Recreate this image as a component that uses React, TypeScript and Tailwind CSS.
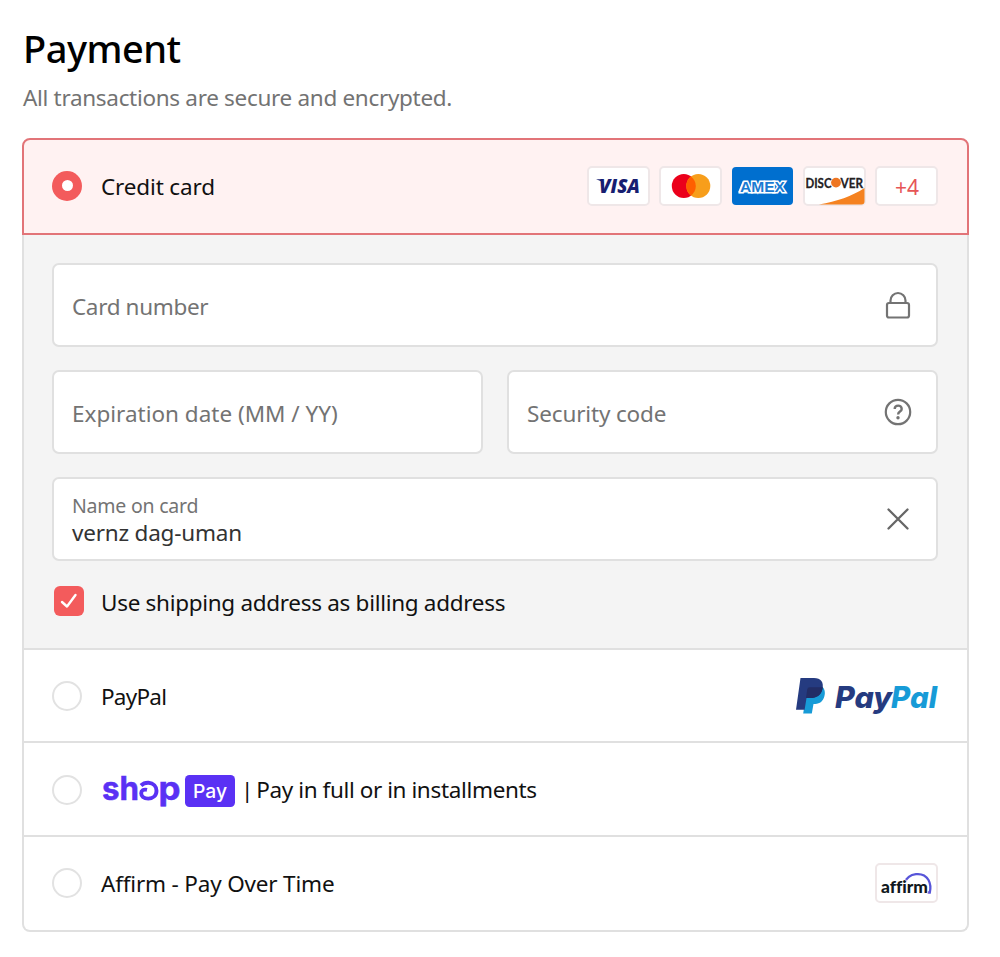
import type { ReactNode } from "react";

function Radio({ checked = false }: { checked?: boolean }) {
  return checked ? (
    <span className="mb-px flex size-[30px] shrink-0 items-center justify-center rounded-full bg-[#f35b5c]">
      <span className="size-[11px] rounded-full bg-white" />
    </span>
  ) : (
    <span className="size-[30px] shrink-0 rounded-full border-2 border-[#e2e2e2] bg-white" />
  );
}

function Badge({ children }: { children: ReactNode }) {
  return (
    <span className="flex h-10 w-[63px] shrink-0 items-center justify-center rounded-[5px] border-2 border-[#efe7e8] bg-white">
      {children}
    </span>
  );
}

function Field({ label, icon }: { label: ReactNode; icon?: ReactNode }) {
  return (
    <div className="flex h-[84px] flex-1 items-center justify-between rounded-[7px] border-2 border-[#e0e0e0] bg-white pr-6 pl-[18px]">
      <span className="pt-[4px] text-[#737373]">{label}</span>
      {icon}
    </div>
  );
}

function Visa() {
  return (
    <svg width="59" height="36" viewBox="0 0 59 36" className="shrink-0 overflow-visible">
      <text x="10" y="24.500" fontFamily="Open Sans, sans-serif" fontSize="18.500" fontWeight="800" fontStyle="italic" fill="#171e71" textLength="41" lengthAdjust="spacingAndGlyphs">VISA</text>
      <path d="M7 11.300h6l2 4.500c-1.500-1.900-4.200-3.300-8-4.500z" fill="#171e71" />
    </svg>
  );
}

function Mastercard() {
  return (
    <svg width="59" height="36" viewBox="0 0 59 36" className="shrink-0">
      <circle cx="22.800" cy="18" r="12" fill="#eb001b" />
      <circle cx="37.300" cy="18" r="12" fill="#f79e1b" />
      <path d="M30 8.400a12 12 0 0 1 0 19.200 12 12 0 0 1 0-19.200z" fill="#ff5f00" />
    </svg>
  );
}

function Amex() {
  return (
    <span className="flex h-10 w-[63px] items-center justify-center">
      <svg width="61" height="38" viewBox="0 0 61 38">
        <rect width="61" height="38" rx="4" fill="#006fcf" />
        <path d="M6 25.500 11 13.500 16 20 15 25.500z" fill="#fff" />
        <text x="8" y="24.500" fontFamily="Liberation Sans, sans-serif" fontSize="15" fontWeight="700" fill="#1a7bd3" stroke="#fff" strokeWidth="2.800" paintOrder="stroke" textLength="45" lengthAdjust="spacingAndGlyphs">AMEX</text>
      </svg>
    </span>
  );
}

function Discover() {
  return (
    <svg width="59" height="36" viewBox="0 0 59 36" className="shrink-0 overflow-visible">
      <path d="M59.500 20V33.500Q59.500 36.500 56.500 36.500H14C32 33.500 47 28 59.500 20z" fill="#f58220" />
      <text x="0.500" y="19.500" fontFamily="Lato, sans-serif" fontSize="14" fontWeight="700" fill="#24211f" stroke="#24211f" strokeWidth="0.300" textLength="26" lengthAdjust="spacingAndGlyphs">DISC</text>
      <circle cx="31" cy="14.600" r="4.900" fill="#ee7623" />
      <text x="35.500" y="19.500" fontFamily="Lato, sans-serif" fontSize="14" fontWeight="700" fill="#24211f" stroke="#24211f" strokeWidth="0.300" textLength="22.500" lengthAdjust="spacingAndGlyphs">VER</text>
    </svg>
  );
}

function PayPal() {
  return (
    <svg width="144" height="38" viewBox="0 0 144 38" className="overflow-visible">
      <path d="M13.500 9H27.500C31.500 12 31.500 17 29.800 21 28 25.500 24.500 27 19.500 27L17.800 36.500H9.200z" fill="#179bd7" />
      <path d="M6.500 1H20C27 1 30 5.500 28.500 11.800 27 18.500 22.500 21 16.500 21H12.500L10.600 32.700H2z" fill="#253b80" />
      <path d="M13.200 12.500Q13.500 10.200 15.800 10.200H28.700L28.500 12C27 18.500 22.500 21 16.500 21H12z" fill="#222d65" />
      <g fontFamily="Inter, sans-serif" fontSize="29.500" fontWeight="800" fontStyle="italic">
        <text x="41" y="31" fill="#253b80" textLength="57" lengthAdjust="spacingAndGlyphs">Pay</text>
        <text x="97" y="31" fill="#179bd7" textLength="46" lengthAdjust="spacingAndGlyphs">Pal</text>
      </g>
    </svg>
  );
}

function ShopPay() {
  return (
    <svg width="134" height="36" viewBox="0 0 134 36" className="overflow-visible">
      <g fontFamily="Inter, sans-serif" fontSize="32" fontWeight="700" fill="#5a31f4" stroke="#5a31f4" strokeWidth="0.500">
        <text x="1" y="28" textLength="37" lengthAdjust="spacingAndGlyphs">sh</text>
        <text x="57.500" y="28" textLength="22" lengthAdjust="spacingAndGlyphs">p</text>
      </g>
      <path d="M40 13.500C42.500 11 45 10.600 47.500 10.700 52.500 11 55.500 14.500 55.500 18.700 55.500 23.500 52 26.600 47.300 26.600 42.500 26.600 40.200 24 40.200 21.200 40.200 18.500 42.500 17 46 17.800" fill="none" stroke="#5a31f4" strokeWidth="3.900" />
      <rect x="84" y="3" width="50" height="32" rx="4.500" fill="#5a31f4" />
      <text x="92" y="25.500" fontFamily="Inter, sans-serif" fontSize="19" fontWeight="500" fill="#fff" textLength="34" lengthAdjust="spacingAndGlyphs">Pay</text>
    </svg>
  );
}

function Affirm() {
  return (
    <svg width="59" height="36" viewBox="0 0 59 36" className="shrink-0">
      <path d="M27.500 18C31.500 7.500 46 6 51.500 15c2.200 4 2.300 8 1.300 12.500H50" fill="none" stroke="#5755d9" strokeWidth="2.300" />
      <text x="4" y="27.500" fontFamily="Lato, sans-serif" fontSize="16.500" fontWeight="900" fill="#101820" stroke="#fff" strokeWidth="1.500" paintOrder="stroke" letterSpacing="0.010" textLength="47" lengthAdjust="spacingAndGlyphs">affirm</text>
    </svg>
  );
}

function Lock() {
  return (
    <svg width="28" height="30" viewBox="0 0 28 30" fill="none" stroke="#737373" strokeWidth="2.200" className="mb-[1px]">
      <rect x="3" y="13" width="22" height="14.500" rx="2" />
      <path d="M6.500 13v-2.500a7.500 7.500 0 0 1 15 0V13" />
    </svg>
  );
}

function Help() {
  return (
    <svg width="28" height="28" viewBox="0 0 28 28" fill="none" stroke="#737373" strokeWidth="2.200">
      <circle cx="14" cy="14" r="12.200" />
      <path d="M10.700 11c0-4.500 7-4.500 7 0 0 2.800-3.600 2.400-3.600 5.500" strokeWidth="2.400" />
      <circle cx="14" cy="19.800" r="1.700" fill="#737373" stroke="none" />
    </svg>
  );
}

export default function App() {
  return (
    <main className="h-[957px] w-[1000px] bg-white pr-[31px] pl-[22px] font-['Noto_Sans',sans-serif] text-[22.500px] leading-8 text-[#111]">
      <h1 className="pt-[22px] pl-px text-[38px] leading-[52px] font-medium tracking-[-0.500px] text-black">Payment</h1>
      <p className="mt-2 pl-px tracking-[-0.310px] text-[#737373]">All transactions are secure and encrypted.</p>

      <section className="mt-6">
        <div className="flex h-[97px] items-center rounded-t-[8px] border-2 border-[#e27478] bg-[#fff2f2] pr-[29px] pb-px pl-7">
          <Radio checked />
          <span className="ml-[19px] pt-px tracking-[-0.150px]">Credit card</span>
          <div className="ml-auto flex gap-[9px]">
            <Badge><Visa /></Badge>
            <Badge><Mastercard /></Badge>
            <Amex />
            <Badge><Discover /></Badge>
            <Badge><span className="pt-[2px] pl-px text-[21px] text-[#e65556]">+4</span></Badge>
          </div>
        </div>

        <div className="overflow-hidden rounded-b-[8px] border-x-2 border-b-2 border-[#e0e0e0]">
          <div className="h-[413px] bg-[#f4f4f4] pt-7 pr-[29px] pl-7">
            <div className="flex flex-col gap-[23px]">
              <div className="flex"><Field label={<span className="tracking-[-0.350px]">Card number</span>} icon={<Lock />} /></div>
              <div className="flex gap-6">
                <Field label="Expiration date (MM / YY)" />
                <Field label={<span className="tracking-[-0.150px]">Security code</span>} icon={<Help />} />
              </div>
              <div className="flex h-[84px] items-center justify-between rounded-[7px] border-2 border-[#e0e0e0] bg-white pr-[26px] pl-[18px]">
                <div className="pt-px">
                  <div className="text-[19.500px] leading-[27px] tracking-[-0.220px] text-[#737373]">Name on card</div>
                  <div className="leading-[28px] tracking-[-0.200px] text-[#333]">vernz dag-uman</div>
                </div>
                <svg width="24" height="24" viewBox="0 0 24 24" stroke="#666" strokeWidth="2.300" strokeLinecap="round">
                  <path d="m2.500 2.500 19 19M21.500 2.500l-19 19" />
                </svg>
              </div>
            </div>
            <div className="mt-[25px] flex items-center pl-[2px]">
              <span className="mb-[3px] flex size-[30px] items-center justify-center rounded-[6px] bg-[#f35b5c]">
                <svg width="18" height="16" viewBox="0 0 18 16" fill="none" stroke="#fff" strokeWidth="2.400" strokeLinecap="round" strokeLinejoin="round">
                  <path d="m2 9 5 4.500L15.500 2" />
                </svg>
              </span>
              <span className="ml-[17px] tracking-[-0.300px]">Use shipping address as billing address</span>
            </div>
          </div>

          <div className="flex h-[93px] items-center border-t-2 border-[#e0e0e0] pr-[29px] pl-7">
            <Radio />
            <span className="ml-[19px] pt-0.5 tracking-[-0.750px]">PayPal</span>
            <span className="ml-auto"><PayPal /></span>
          </div>
          <div className="flex h-[94px] items-center border-t-2 border-[#e0e0e0] pt-px pr-[29px] pl-7">
            <Radio />
            <span className="ml-[19px]"><ShopPay /></span>
            <span className="ml-[6px] pt-px tracking-[-0.330px] [word-spacing:-0.300px]"><span className="-mr-[2px]">|</span> Pay in full or in installments</span>
          </div>
          <div className="flex h-[95px] items-center border-t-2 border-[#e0e0e0] pr-[29px] pb-px pl-7">
            <Radio />
            <span className="ml-[19px] pt-px tracking-[-0.180px]">Affirm - Pay Over Time</span>
            <span className="ml-auto"><Badge><Affirm /></Badge></span>
          </div>
        </div>
      </section>
    </main>
  );
}
